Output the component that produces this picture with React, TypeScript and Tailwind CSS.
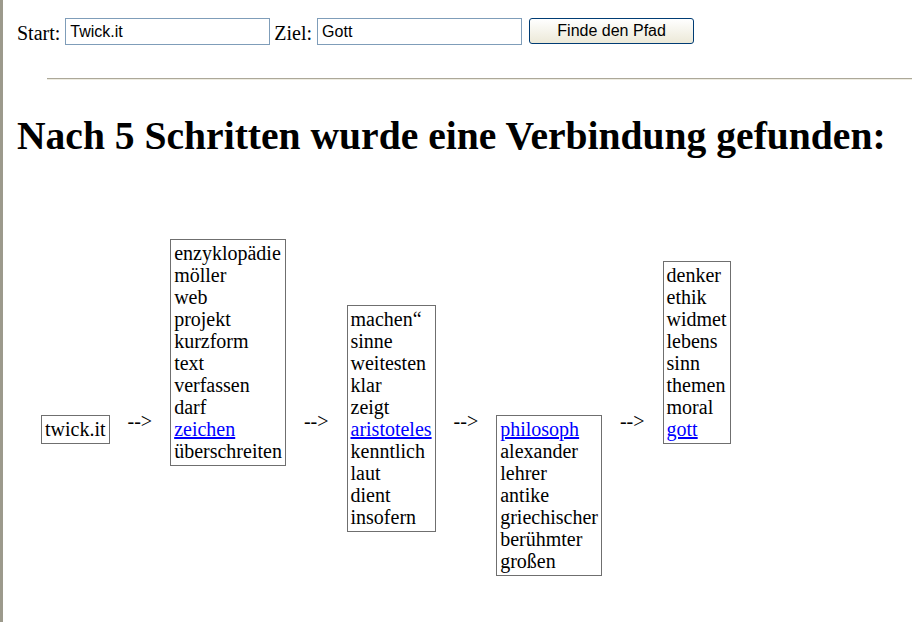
const columns: { words: string[]; link: string; top: string }[] = [
  {
    words: ["enzyklopädie", "möller", "web", "projekt", "kurzform", "text", "verfassen", "darf", "zeichen", "überschreiten"],
    link: "zeichen",
    top: "mt-0",
  },
  {
    words: ["machen“", "sinne", "weitesten", "klar", "zeigt", "aristoteles", "kenntlich", "laut", "dient", "insofern"],
    link: "aristoteles",
    top: "mt-[66px]",
  },
  {
    words: ["philosoph", "alexander", "lehrer", "antike", "griechischer", "berühmter", "großen"],
    link: "philosoph",
    top: "mt-[176px]",
  },
  {
    words: ["denker", "ethik", "widmet", "lebens", "sinn", "themen", "moral", "gott"],
    link: "gott",
    top: "mt-[22px]",
  },
];

function Arrow() {
  return <div className="mt-[171px] leading-[22px]">--&gt;</div>;
}

function WordBox({ words, link, top }: { words: string[]; link: string; top: string }) {
  return (
    <div className={`${top} border border-[#6f6f6f] px-[3px] pt-[2px] pb-[3px] leading-[22px]`}>
      {words.map((w) => (
        <div key={w}>
          {w === link ? (
            <a href="#" className="text-[#0000ff] underline">
              {w}
            </a>
          ) : (
            w
          )}
        </div>
      ))}
    </div>
  );
}

export default function App() {
  return (
    <div className="min-h-screen border-l-[3px] border-[#9c9a8c] bg-white font-['Liberation_Serif',serif] text-[20px] text-black">
      <form className="flex items-start pl-[14px] pt-[18px]" onSubmit={(e) => e.preventDefault()}>
        <label htmlFor="start" className="mt-[4px] leading-[22px]">Start:</label>
        <input
          id="start"
          defaultValue="Twick.it"
          className="ml-[5px] h-[27px] w-[205px] border border-[#7f9db9] px-[4px] font-['Liberation_Sans',sans-serif] text-[16px] outline-none"
        />
        <label htmlFor="ziel" className="ml-[4px] mt-[4px] leading-[22px]">Ziel:</label>
        <input
          id="ziel"
          defaultValue="Gott"
          className="ml-[5px] h-[27px] w-[205px] border border-[#7f9db9] px-[4px] font-['Liberation_Sans',sans-serif] text-[16px] outline-none"
        />
        <button
          type="submit"
          className="ml-[7px] h-[26px] w-[165px] rounded-[3px] border border-[#003c74] bg-gradient-to-b from-white to-[#ece9d8] font-['Liberation_Sans',sans-serif] text-[16px] leading-none"
        >
          Finde den Pfad
        </button>
      </form>

      <div className="ml-[44px] mt-[33px] h-[2px] border-t border-b border-t-[#aca899] border-b-[#eeece1]" />

      <h1 className="ml-[14px] mt-[34px] text-[39.6px] font-bold leading-[45px]">
        Nach 5 Schritten wurde eine Verbindung gefunden:
      </h1>

      <div className="mt-[80px] flex items-start gap-[18px] pl-[38px]">
        <div className="mt-[176px] border border-[#6f6f6f] px-[3px] pt-[2px] pb-[3px] leading-[22px]">twick.it</div>
        {columns.map((c) => (
          <div key={c.link} className="flex items-start gap-[18px]">
            <Arrow />
            <WordBox words={c.words} link={c.link} top={c.top} />
          </div>
        ))}
      </div>
    </div>
  );
}
